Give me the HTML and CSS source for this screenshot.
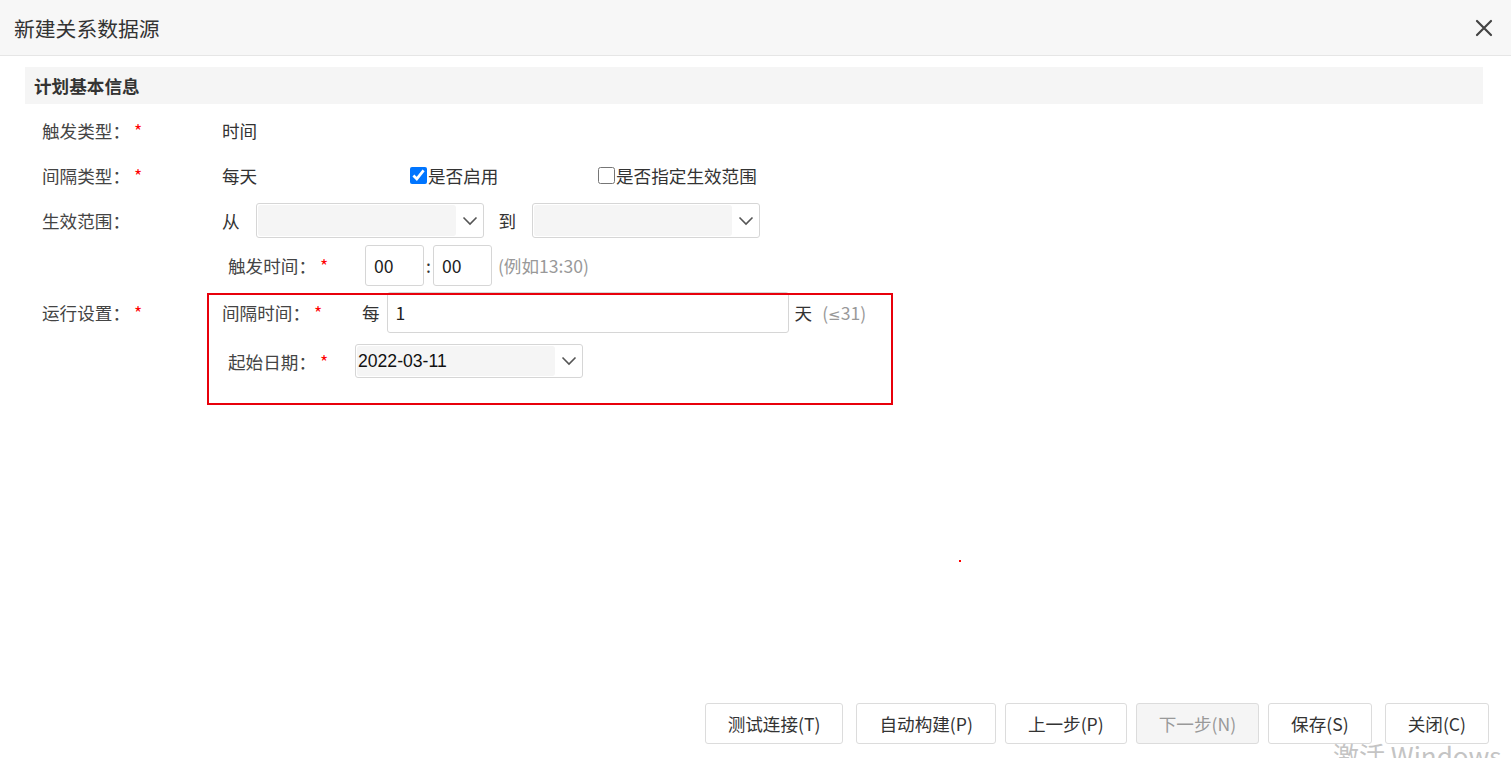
FILE: index.html
```html
<!DOCTYPE html>
<html lang="zh-CN">

<head>
    <meta charset="UTF-8">
    <meta name="viewport" content="width=device-width, initial-scale=1.0">
    <title>新建关系数据源</title>
    <link rel="stylesheet" href="styles.css">
</head>

<body>
    <div class="dialog">
        <div class="dialog-head">
            <span class="dialog-title">新建关系数据源</span>
            <span class="close">
                <svg width="20" height="20" viewBox="0 0 20 20">
                    <path d="M3 3 L17 17 M17 3 L3 17" stroke="#444" stroke-width="2.2" stroke-linecap="round" fill="none" />
                </svg>
            </span>
        </div>

        <div class="dialog-body">
            <div class="section-title">计划基本信息</div>
            <div class="form">
                <div class="row">
                    <div class="label">触发类型：<span class="req">*</span></div>
                    <div class="text">时间</div>
                </div>
                <div class="row">
                    <div class="label">间隔类型：<span class="req">*</span></div>
                    <div class="text w-every">每天</div>
                    <label class="check w-check"><input type="checkbox" checked>是否启用</label>
                    <label class="check"><input type="checkbox">是否指定生效范围</label>
                </div>
                <div class="row">
                    <div class="label">生效范围：</div>
                    <span class="word">从</span>
                    <div class="select">
                        <div class="select-val"></div>
                        <div class="select-arrow"><svg width="16" height="10" viewBox="0 0 16 10"><path d="M1.5 1.5 L8 8 L14.5 1.5" stroke="#555" stroke-width="1.6" fill="none" /></svg></div>
                    </div>
                    <span class="word to">到</span>
                    <div class="select">
                        <div class="select-val"></div>
                        <div class="select-arrow"><svg width="16" height="10" viewBox="0 0 16 10"><path d="M1.5 1.5 L8 8 L14.5 1.5" stroke="#555" stroke-width="1.6" fill="none" /></svg></div>
                    </div>
                </div>
                <div class="row">
                    <div class="label"></div>
                    <div class="sublabel w-time">触发时间：<span class="req">*</span></div>
                    <input class="input small" value="00">
                    <span class="colon">:</span>
                    <input class="input small" value="00">
                    <span class="hint">(例如13:30)</span>
                </div>
                <div class="row run">
                    <div class="label tall">运行设置：<span class="req">*</span></div>
                    <div class="run-box">
                        <div class="subrow">
                            <div class="sublabel first w-gap">间隔时间：<span class="req">*</span></div>
                            <span class="word">每</span>
                            <input class="input wide" value="1">
                            <span class="word day">天</span>
                            <span class="hint">&nbsp;(<span class="le">≤</span>31)</span>
                        </div>
                        <div class="subrow second">
                            <div class="sublabel w-date">起始日期：<span class="req">*</span></div>
                            <div class="select date">
                                <div class="select-val">2022-03-11</div>
                                <div class="select-arrow"><svg width="16" height="10" viewBox="0 0 16 10"><path d="M1.5 1.5 L8 8 L14.5 1.5" stroke="#555" stroke-width="1.6" fill="none" /></svg></div>
                            </div>
                        </div>
                    </div>
                </div>
            </div>
        </div>

        <div class="dialog-foot">
            <button class="btn">测试连接(T)</button>
            <button class="btn gap-l">自动构建(P)</button>
            <button class="btn">上一步(P)</button>
            <button class="btn disabled">下一步(N)</button>
            <button class="btn">保存(S)</button>
            <button class="btn gap-l">关闭(C)</button>
        </div>
    </div>

    <div class="mark-box"></div>
    <div class="mark-dot"></div>
    <div class="watermark">激活 Windows</div>
</body>

</html>
```

FILE: styles.css
```css
html,
body {
    margin: 0;
    height: 100%;
    overflow: hidden;
}

body {
    font-family: "Noto Sans CJK SC", "Microsoft YaHei", sans-serif;
    font-size: 17.6px;
    color: #333;
    background: #fff;
}

.dialog {
    height: 100%;
    display: flex;
    flex-direction: column;
}

.dialog-head {
    height: 55px;
    display: flex;
    align-items: center;
    justify-content: space-between;
    padding: 0 17px 0 14px;
    background: #f7f7f7;
    border-bottom: 1px solid #e6e6e6;
}

.dialog-title {
    font-size: 20.8px;
    color: #333;
}

.close {
    display: flex;
}

.dialog-body {
    flex: 1;
}

.section-title {
    margin: 11px 28px 0 25px;
    height: 37px;
    line-height: 37px;
    padding-left: 9px;
    background: #f5f5f5;
    font-weight: bold;
    color: #333;
}

.form {
    padding-top: 4px;
}

.row {
    height: 45px;
    display: flex;
    align-items: center;
}

.label {
    width: 180px;
    padding-left: 42px;
    flex-shrink: 0;
    color: #444;
}

.req {
    color: #f00;
    margin-left: 4px;
}

.text {
    color: #333;
}

.w-every {
    width: 188px;
}

.check {
    display: flex;
    align-items: center;
    color: #333;
}

.check input {
    width: 17px;
    height: 17px;
    margin: 0 1px 0 0;
}

.w-check {
    width: 188px;
}

.word {
    color: #333;
}

.to {
    margin-left: 15px;
}

.select {
    width: 228px;
    height: 35px;
    box-sizing: border-box;
    margin-left: 16px;
    border: 1px solid #d6d6d6;
    border-radius: 3px;
    display: flex;
    background: #fff;
}

.select-val {
    flex: 1;
    margin: 1px;
    border-radius: 3px;
    background: #f5f5f5;
    font-family: "Liberation Sans", Arial, sans-serif;
    color: #111;
    line-height: 31px;
    padding-left: 1px;
}

.select-arrow {
    width: 26px;
    display: flex;
    align-items: center;
    justify-content: center;
}

.sublabel {
    margin-left: 6px;
    color: #444;
    flex-shrink: 0;
}

.sublabel.first {
    margin-left: 0;
}

.w-time {
    width: 137px;
}

.w-gap {
    width: 140px;
}

.w-date {
    width: 127px;
}

.input {
    height: 41px;
    box-sizing: border-box;
    border: 1px solid #d6d6d6;
    border-radius: 3px;
    padding: 0 8px;
    font-family: "Noto Sans CJK SC", sans-serif;
    font-size: 17.6px;
    color: #222;
    outline: none;
}

.input.small {
    width: 59px;
}

.colon {
    margin: 0 2px;
}

.hint {
    color: #999;
    margin-left: 6px;
}

.le {
    font-family: "DejaVu Sans", sans-serif;
    font-size: 15px;
}

.row.run {
    height: auto;
    align-items: flex-start;
    padding-top: 4px;
}

.label.tall {
    line-height: 41px;
}

.run-box {
    display: flex;
    flex-direction: column;
}

.subrow {
    display: flex;
    align-items: center;
    height: 41px;
}

.subrow.second {
    height: 34px;
    margin-top: 11px;
}

.input.wide {
    width: 402px;
    margin-left: 7px;
}

.day {
    margin-left: 6px;
}

.select.date {
    height: 34px;
    margin-left: 0;
}

.dialog-foot {
    display: flex;
    justify-content: flex-end;
    padding: 0 22px 14px 0;
}

.btn {
    height: 41px;
    margin-left: 9px;
    padding: 0 22px;
    border: 1px solid #dcdcdc;
    border-radius: 3px;
    background: #fff;
    font-family: "Noto Sans CJK SC", sans-serif;
    font-size: 17.6px;
    color: #333;
}

.btn.gap-l {
    margin-left: 13px;
}

.btn.disabled {
    background: #f5f5f5;
    color: #999;
}

.mark-box {
    position: absolute;
    left: 207px;
    top: 293px;
    width: 682px;
    height: 108px;
    border: 2px solid #e8000b;
}

.mark-dot {
    position: absolute;
    left: 959px;
    top: 560px;
    width: 2px;
    height: 2px;
    background: #f00;
}

.watermark {
    position: absolute;
    left: 1333px;
    top: 735px;
    font-size: 26px;
    line-height: 40px;
    color: #c4c4c4;
    white-space: nowrap;
}
```
